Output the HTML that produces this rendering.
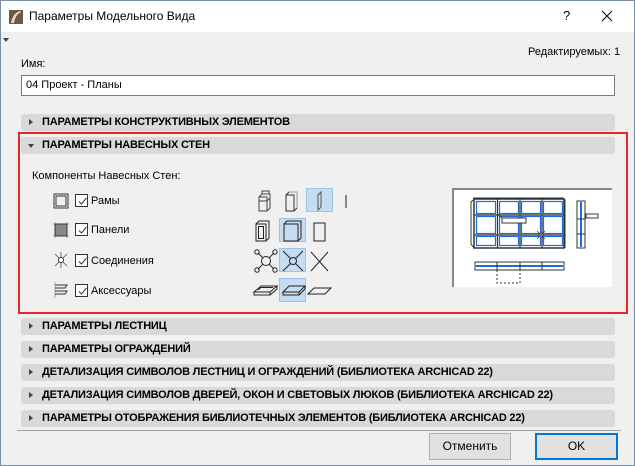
<!DOCTYPE html>
<html><head><meta charset="utf-8"><style>
*{box-sizing:border-box;margin:0;padding:0}
body{width:635px;height:466px;overflow:hidden;font-family:"Liberation Sans","Noto Sans CJK SC",sans-serif;font-size:11px;color:#000;background:#f0f0f0;position:relative}
.win{position:absolute;left:0;top:0;width:635px;height:466px;border:1px solid #7a8ea8;background:#f0f0f0}
.title{position:absolute;left:0;top:0;width:633px;height:31px;background:#fff}
.abs{position:absolute}
.bar{position:absolute;left:20px;width:594px;height:17px;background:#d9d9d9;border-radius:3px;font-weight:bold;font-size:11px;line-height:17px;padding-left:21px;letter-spacing:-0.2px}
.bar:before{content:"";position:absolute;left:8px;top:5px;border-left:4px solid #444;border-top:3.5px solid transparent;border-bottom:3.5px solid transparent}
.bar.open:before{left:7px;top:7px;border-top:4px solid #444;border-left:3.5px solid transparent;border-right:3.5px solid transparent;border-bottom:0}
.cb{position:absolute;width:13px;height:13px;border:1px solid #333;background:#fff}
.cb svg{position:absolute;left:1px;top:1px}
.sel{position:absolute;background:#c5dcf1;border:1px solid #99c3ea}
.btn{position:absolute;height:27px;background:#e1e1e1;border:1px solid #adadad;text-align:center;line-height:25px;font-size:12px}
</style></head><body><div class="win">
<div class="title">
<svg class="abs" style="left:8px;top:9px" width="14" height="14"><rect width="14" height="14" fill="#6b5a45"/><path d="M2 13 Q4 3 11 1 L12 2 Q6 5 5 13Z" fill="#e8dcc0"/></svg>
<div class="abs" style="left:28px;top:8px;font-size:12px">Параметры Модельного Вида</div>
<div class="abs" style="left:562px;top:7px;font-size:13px">?</div>
<svg class="abs" style="left:600px;top:9px" width="12" height="12"><path d="M1 1L11 11M11 1L1 11" stroke="#000" stroke-width="1"/></svg>
</div>
<div class="abs" style="left:2px;top:37px;border-top:4px solid #444;border-left:3.5px solid transparent;border-right:3.5px solid transparent"></div>
<div class="abs" style="left:527px;top:45px">Редактируемых: 1</div>
<div class="abs" style="left:20px;top:57px">Имя:</div>
<div class="abs" style="left:20px;top:74px;width:594px;height:21px;background:#fff;border:1px solid #7a7a7a;padding:3px 4px">04 Проект - Планы</div>
<div class="bar" style="top:113px">ПАРАМЕТРЫ КОНСТРУКТИВНЫХ ЭЛЕМЕНТОВ</div>
<div class="abs" style="left:17px;top:131px;width:610px;height:182px;border:2px solid #e8252a"></div>
<div class="bar open" style="top:136px">ПАРАМЕТРЫ НАВЕСНЫХ СТЕН</div>
<div class="abs" style="left:31px;top:169px">Компоненты Навесных Стен:</div>
<svg class="abs" style="left:52px;top:192px" width="16" height="16"><rect x="1" y="1" width="14" height="14" fill="none" stroke="#333"/><rect x="3" y="3" width="10" height="10" fill="none" stroke="#333"/></svg>
<svg class="abs" style="left:52px;top:221px" width="16" height="16"><path d="M0 2H16M0 14H16M2 0V16M14 0V16" stroke="#aaa"/><rect x="2" y="2" width="12" height="12" fill="#888" stroke="#333"/></svg>
<svg class="abs" style="left:52px;top:251px" width="16" height="16"><path d="M2 2L14 14M14 2L2 14M8 0V16" stroke="#555" stroke-width=".8"/><circle cx="8" cy="8" r="2.5" fill="#fff" stroke="#333"/></svg>
<svg class="abs" style="left:52px;top:281px" width="16" height="16"><path d="M2 0V16" stroke="#aaa"/><path d="M2 3H14L12 6H2M2 9H14L12 12H2" fill="none" stroke="#333"/></svg>
<div class="cb" style="left:74px;top:193px"><svg width="11" height="11"><path d="M2 5.5L4.5 8L9.5 2" fill="none" stroke="#333"/></svg></div>
<div class="cb" style="left:74px;top:222px"><svg width="11" height="11"><path d="M2 5.5L4.5 8L9.5 2" fill="none" stroke="#333"/></svg></div>
<div class="cb" style="left:74px;top:253px"><svg width="11" height="11"><path d="M2 5.5L4.5 8L9.5 2" fill="none" stroke="#333"/></svg></div>
<div class="cb" style="left:74px;top:283px"><svg width="11" height="11"><path d="M2 5.5L4.5 8L9.5 2" fill="none" stroke="#333"/></svg></div>
<div class="abs" style="left:90px;top:194px">Рамы</div>
<div class="abs" style="left:90px;top:223px">Панели</div>
<div class="abs" style="left:90px;top:254px">Соединения</div>
<div class="abs" style="left:90px;top:284px">Аксессуары</div>
<div class="sel" style="left:305px;top:187px;width:27px;height:24px"></div>
<div class="sel" style="left:278px;top:217px;width:27px;height:24px"></div>
<div class="sel" style="left:278px;top:247px;width:27px;height:24px"></div>
<div class="sel" style="left:278px;top:277px;width:27px;height:24px"></div>
<svg class="abs" style="left:245px;top:185px" width="110" height="120" fill="none" stroke="#222">
<path d="M13 11H21V25H13ZM13 11L16 8H24V22L21 25M13 15H21L24 12M16 8V5H23V8" stroke="#444"/>
<path d="M40 9H48V25H40ZM40 9L43 6H51V22L48 25" stroke="#333"/><path d="M43 6H51V22" stroke="#999"/>
<path d="M72 24L75 21V6L72 9Z" stroke="#555"/>
<path d="M100 9V22"/>
<path d="M10 38H20V55H10ZM12.5 40.5H17.5V52.5H12.5ZM10 38L13 35H23V52L20 55"/>
<path d="M38 38H52V55H38ZM38 38L41 35H55V52L52 55"/>
<path d="M68 37H79V55H68Z"/>
<circle cx="20" cy="75" r="4.5"/><path d="M17 72L12 67M23 72L28 67M17 78L12 83M23 78L28 83"/><circle cx="11" cy="66" r="2.2"/><circle cx="29" cy="66" r="2.2"/><circle cx="11" cy="84" r="2.2"/><circle cx="29" cy="84" r="2.2"/>
<circle cx="47" cy="75" r="3.5"/><path d="M44.5 72.5L37 65M49.5 72.5L57 65M44.5 77.5L37 85M49.5 77.5L57 85"/>
<path d="M65 66L82 85M82 66L65 85"/>
<path d="M8 106L15 100H31L24 106ZM8 106V109H24L31 103V100M24 106V109M12 104L15 101.5H27"/>
<path d="M37 106L43 100H59L53 106ZM37 106V109H53L59 103V100M53 106V109"/>
<path d="M62 108L68 102H85L79 108Z"/>
</svg>
<div class="abs" style="left:451px;top:187px;width:160px;height:99px;background:#fff;border-top:2px solid #888;border-left:2px solid #888"></div>
<svg class="abs" style="left:451px;top:187px" width="160" height="99" fill="none">
<path d="M21 12L19 14V56L22 60M21 10H111L113 12V60" stroke="#333"/>
<rect x="22" y="11" width="90" height="49" stroke="#333" stroke-width="1.5"/>
<g stroke="#1a6ee0" stroke-width="1.2">
<rect x="24.5" y="13.5" width="19" height="12"/><rect x="47.5" y="13.5" width="19" height="12"/><rect x="69.5" y="13.5" width="19" height="12"/><rect x="91.5" y="13.5" width="19" height="12"/>
<rect x="24.5" y="28.5" width="19" height="17"/><rect x="47.5" y="28.5" width="19" height="17"/><rect x="69.5" y="28.5" width="19" height="17"/><rect x="91.5" y="28.5" width="19" height="17"/>
<rect x="24.5" y="48.5" width="19" height="9"/><rect x="47.5" y="48.5" width="19" height="9"/><rect x="69.5" y="48.5" width="19" height="9"/><rect x="91.5" y="48.5" width="19" height="9"/>
</g>
<path d="M22 27H112M22 47H112M45.5 11V60M68 11V60M90 11V60" stroke="#333" stroke-width="1.2"/>
<path d="M46 26L50 30H74V35H50V30" fill="#fff" stroke="#333"/>
<circle cx="89" cy="47" r="2" fill="#fff" stroke="#333"/><path d="M85 43L93 51M93 43L85 51" stroke="#333" stroke-width=".6"/>
<rect x="125" y="13" width="8" height="47" stroke="#333"/><path d="M129 14V59" stroke="#1a6ee0" stroke-width="2"/><path d="M125 31H133M125 46H133" stroke="#333"/>
<path d="M134 26H146V30H134Z" stroke="#333"/>
<rect x="23" y="74" width="89" height="8" stroke="#333"/><path d="M24 78H111" stroke="#1a6ee0" stroke-width="2"/><path d="M45 74V82M68 74V82M90 74V82" stroke="#333"/>
<path d="M45 82V95H68V82" stroke="#333" stroke-dasharray="2 2"/>
</svg>
<div class="bar" style="top:317px">ПАРАМЕТРЫ ЛЕСТНИЦ</div>
<div class="bar" style="top:340px">ПАРАМЕТРЫ ОГРАЖДЕНИЙ</div>
<div class="bar" style="top:363px">ДЕТАЛИЗАЦИЯ СИМВОЛОВ ЛЕСТНИЦ И ОГРАЖДЕНИЙ (БИБЛИОТЕКА ARCHICAD 22)</div>
<div class="bar" style="top:386px">ДЕТАЛИЗАЦИЯ СИМВОЛОВ ДВЕРЕЙ, ОКОН И СВЕТОВЫХ ЛЮКОВ (БИБЛИОТЕКА ARCHICAD 22)</div>
<div class="bar" style="top:409px">ПАРАМЕТРЫ ОТОБРАЖЕНИЯ БИБЛИОТЕЧНЫХ ЭЛЕМЕНТОВ (БИБЛИОТЕКА ARCHICAD 22)</div>
<div class="abs" style="left:16px;top:429px;width:604px;height:1px;background:#a0a0a0"></div>
<div class="btn" style="left:428px;top:432px;width:82px">Отменить</div>
<div class="btn" style="left:534px;top:432px;width:83px;border:2px solid #0078d7;line-height:23px">OK</div>
</div></body></html>
